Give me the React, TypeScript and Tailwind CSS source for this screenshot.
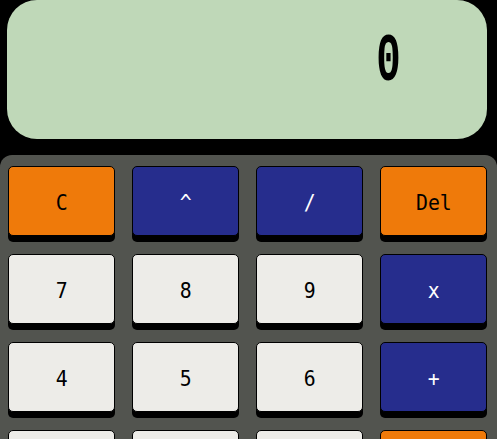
const keys = [
  { label: "C", kind: "op" },
  { label: "^", kind: "fn" },
  { label: "/", kind: "fn" },
  { label: "Del", kind: "op" },
  { label: "7", kind: "num" },
  { label: "8", kind: "num" },
  { label: "9", kind: "num" },
  { label: "x", kind: "fn" },
  { label: "4", kind: "num" },
  { label: "5", kind: "num" },
  { label: "6", kind: "num" },
  { label: "+", kind: "fn" },
  { label: "1", kind: "num" },
  { label: "2", kind: "num" },
  { label: "3", kind: "num" },
  { label: "=", kind: "op" },
];

function keyClass(kind: string) {
  if (kind === "op") return "bg-[#ef7a0a] text-black";
  if (kind === "fn") return "bg-[#262d8d] text-white";
  return "bg-[#edece8] text-black";
}

export default function App() {
  return (
    <div
      className="w-[497px] h-[439px] overflow-hidden bg-black"
      style={{ fontFamily: '"DejaVu Sans Mono", "Liberation Mono", monospace' }}
    >
      <div className="mx-[7px] w-[480px] h-[139px] rounded-[30px] bg-[#bfd8b8] flex items-center justify-end pr-[78px] pb-[16px]">
        <span
          className="text-[68px] leading-none text-black font-bold inline-block scale-x-[0.6]"
          style={{ fontFamily: '"Liberation Mono", monospace' }}
        >
          0
        </span>
      </div>
      <div className="mt-[16px] bg-[#52544f] rounded-t-[12px] pt-[11px] pl-[8px] pr-[10px] pb-4">
        <div className="grid grid-cols-4 gap-x-[17px] gap-y-[18px]">
          {keys.map((k) => (
            <button
              key={k.label}
              className={`h-[70px] rounded-[5px] border border-black shadow-[0_6px_0_#000] flex items-center justify-center pt-[4px] ${keyClass(k.kind)}`}
            >
              <span className="text-[22px] leading-none inline-block scale-x-[0.9]">{k.label}</span>
            </button>
          ))}
        </div>
      </div>
    </div>
  );
}
